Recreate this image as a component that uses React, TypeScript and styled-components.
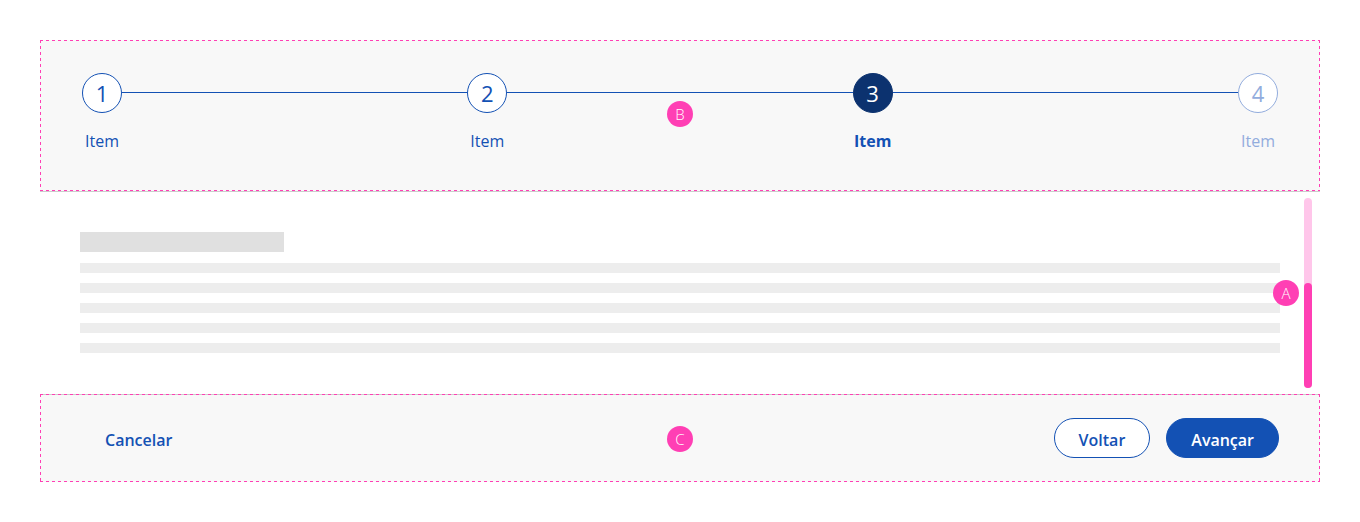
import React from 'react';
import styled, { createGlobalStyle, css } from 'styled-components';

const BLUE = '#1351b4';
const NAVY = '#0c326f';
const PALE = '#92acdd';
const PINK = '#ff3fb4';

const GlobalStyle = createGlobalStyle`
  * { box-sizing: border-box; }
  body {
    margin: 0;
    background: #ffffff;
    font-family: "Open Sans", "Liberation Sans", sans-serif;
  }
`;

// pink dotted annotation frame drawn over a region
const dashes = css`
  background:
    repeating-linear-gradient(90deg, ${PINK} 0 3px, transparent 3px 6px) top left / 100% 1px no-repeat,
    repeating-linear-gradient(90deg, ${PINK} 0 3px, transparent 3px 6px) bottom left / 100% 1px no-repeat,
    repeating-linear-gradient(180deg, ${PINK} 0 3px, transparent 3px 6px) top left / 1px 100% no-repeat,
    repeating-linear-gradient(180deg, ${PINK} 0 3px, transparent 3px 6px) top right / 1px 100% no-repeat;
`;

const Page = styled.div`
  padding: 40px;
  width: 1360px;
`;

const Header = styled.div`
  position: relative;
  height: 152px;
  background: #f8f8f8;
  border-bottom: 1px solid #cccccc;
  padding: 33px 42px 0 42px;
  &::after {
    content: '';
    position: absolute;
    left: 0;
    right: 0;
    top: 0;
    height: 151px;
    pointer-events: none;
    ${dashes}
  }
`;

const Steps = styled.div`
  display: flex;
  align-items: flex-start;
`;

type StepState = 'done' | 'active' | 'todo';

const Step = styled.div`
  display: flex;
  flex-direction: column;
  align-items: center;
  width: 40px;
`;

const Circle = styled.div<{ $state: StepState }>`
  width: 40px;
  height: 40px;
  border-radius: 50%;
  display: flex;
  align-items: center;
  justify-content: center;
  font-size: 22px;
  font-weight: 400;
  border: 1px solid ${(p) => (p.$state === 'todo' ? PALE : p.$state === 'active' ? NAVY : BLUE)};
  background: ${(p) => (p.$state === 'active' ? NAVY : '#ffffff')};
  color: ${(p) => (p.$state === 'active' ? '#ffffff' : p.$state === 'todo' ? PALE : BLUE)};
`;

const Label = styled.span<{ $state: StepState }>`
  margin-top: 18px;
  font-size: 16px;
  line-height: 20px;
  white-space: nowrap;
  font-weight: ${(p) => (p.$state === 'active' ? 700 : 400)};
  color: ${(p) => (p.$state === 'todo' ? PALE : BLUE)};
`;

const Connector = styled.div`
  flex: 1;
  height: 1px;
  margin-top: 19px;
  background: ${BLUE};
`;

const Content = styled.div`
  position: relative;
  height: 202px;
  display: flex;
`;

const Body = styled.div`
  flex: 1;
  padding: 40px 24px 0 40px;
  display: flex;
  flex-direction: column;
  gap: 10px;
`;

const Title = styled.div`
  width: 204px;
  height: 20px;
  background: #e0e0e0;
  margin-bottom: 1px;
`;

const TextLine = styled.div`
  height: 10px;
  background: #ededed;
`;

const Scrollbar = styled.div`
  width: 8px;
  margin: 6px 8px 6px 0;
  border-radius: 4px;
  background: #ffc6ea;
  display: flex;
  flex-direction: column;
  justify-content: flex-end;
`;

const Thumb = styled.div`
  height: 105px;
  border-radius: 4px;
  background: ${PINK};
`;

const Footer = styled.div`
  position: relative;
  height: 88px;
  background: #f8f8f8;
  border-top: 1px solid #cccccc;
  display: flex;
  align-items: center;
  padding: 0 41px 0 40px;
  &::after {
    content: '';
    position: absolute;
    left: 0;
    right: 0;
    top: -1px;
    bottom: 0;
    pointer-events: none;
    ${dashes}
  }
`;

const Actions = styled.div`
  margin-left: auto;
  display: flex;
  gap: 16px;
`;

const Button = styled.button<{ $variant: 'primary' | 'secondary' | 'tertiary' }>`
  height: 40px;
  padding: 3px 24px 0;
  border-radius: 20px;
  font-family: inherit;
  font-size: 16px;
  font-weight: 600;
  cursor: pointer;
  border: 1px solid ${(p) => (p.$variant === 'tertiary' ? 'transparent' : BLUE)};
  background: ${(p) => (p.$variant === 'primary' ? BLUE : p.$variant === 'secondary' ? '#ffffff' : 'transparent')};
  color: ${(p) => (p.$variant === 'primary' ? '#ffffff' : BLUE)};
  margin-top: -1px;
`;

const Marker = styled.span<{ $x: number; $y: number }>`
  position: absolute;
  left: ${(p) => p.$x - 13}px;
  top: ${(p) => p.$y - 13}px;
  width: 26px;
  height: 26px;
  border-radius: 50%;
  background: ${PINK};
  color: #ffffff;
  font-size: 15px;
  font-weight: 300;
  display: flex;
  align-items: center;
  justify-content: center;
  z-index: 2;
`;

const steps: { n: number; state: StepState }[] = [
  { n: 1, state: 'done' },
  { n: 2, state: 'done' },
  { n: 3, state: 'active' },
  { n: 4, state: 'todo' },
];

export default function App() {
  return (
    <>
      <GlobalStyle />
      <Page>
        <Header>
          <Steps>
            {steps.map((s, i) => (
              <React.Fragment key={s.n}>
                {i > 0 && <Connector />}
                <Step>
                  <Circle $state={s.state}>{s.n}</Circle>
                  <Label $state={s.state}>Item</Label>
                </Step>
              </React.Fragment>
            ))}
          </Steps>
          <Marker $x={640} $y={74}>B</Marker>
        </Header>
        <Content>
          <Body>
            <Title />
            <TextLine />
            <TextLine />
            <TextLine />
            <TextLine />
            <TextLine />
          </Body>
          <Scrollbar>
            <Thumb />
          </Scrollbar>
          <Marker $x={1246} $y={101}>A</Marker>
        </Content>
        <Footer>
          <Button $variant="tertiary">Cancelar</Button>
          <Actions>
            <Button $variant="secondary">Voltar</Button>
            <Button $variant="primary">Avançar</Button>
          </Actions>
          <Marker $x={640} $y={44}>C</Marker>
        </Footer>
      </Page>
    </>
  );
}
